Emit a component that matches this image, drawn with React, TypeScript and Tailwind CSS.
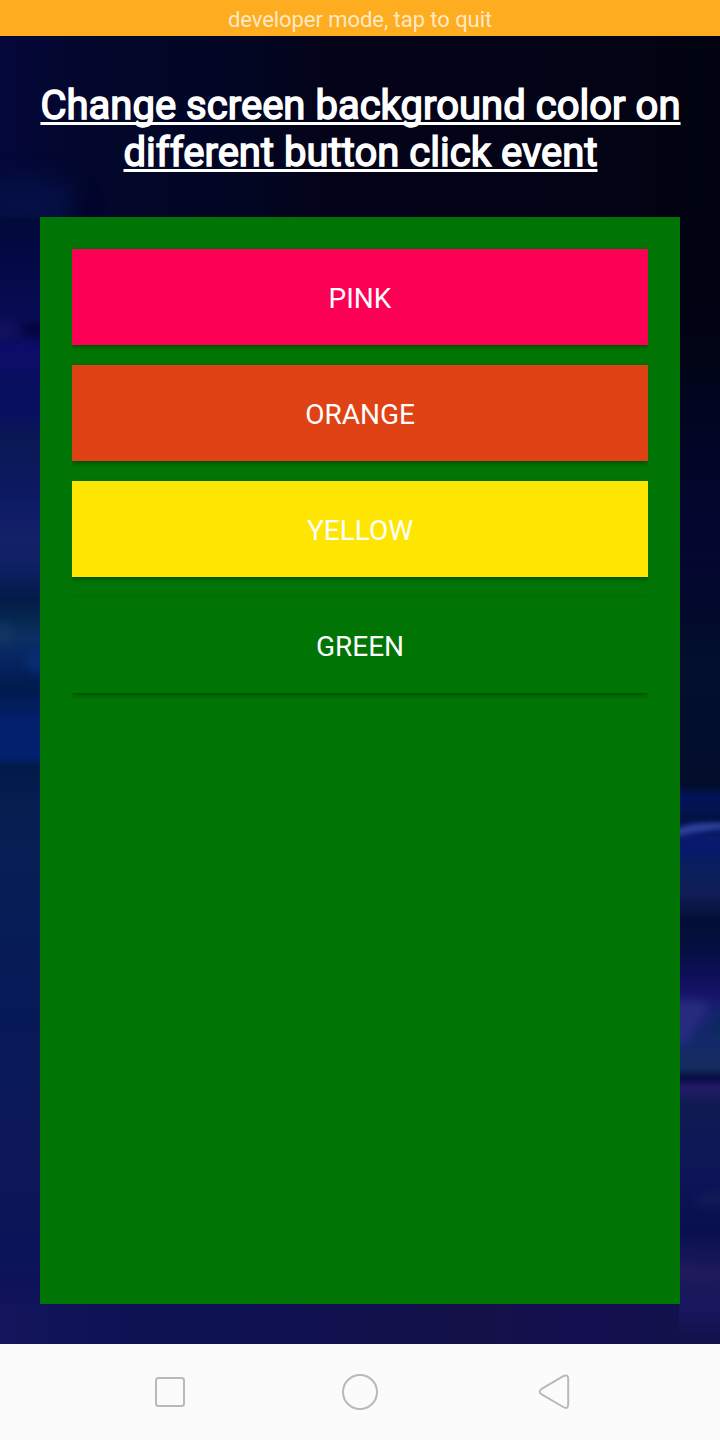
const leftStops: [number, string][] = [
  [36, "#040738"], [150, "#03073a"], [172, "#04094a"], [185, "#040a42"], [212, "#020b3a"], [241, "#02083f"],
  [295, "#050b4e"], [318, "#090d54"], [350, "#0e0c6a"], [385, "#090f5f"], [412, "#070f60"], [440, "#0a1854"], [500, "#0d1a64"],
  [540, "#14226a"], [572, "#0c1f5f"], [598, "#021b4a"], [620, "#05284f"], [638, "#0c3066"], [665, "#05225f"],
  [690, "#011b4d"], [720, "#02206c"], [757, "#02206e"], [766, "#001a4a"], [790, "#051d4e"], [850, "#081f55"],
  [1000, "#051a57"], [1130, "#0d1858"], [1250, "#0b1458"], [1344, "#14125c"],
];

const rightStops: [number, string][] = [
  [36, "#010410"], [180, "#050312"], [300, "#020213"], [360, "#010515"], [400, "#01051f"], [480, "#03062a"],
  [540, "#040630"], [610, "#02092c"], [660, "#020f2e"], [785, "#020d2c"], [797, "#03135a"], [818, "#021245"],
  [838, "#0a1a6e"], [850, "#07196c"], [870, "#0b205c"], [895, "#101c55"], [920, "#030e36"], [950, "#050f42"],
  [975, "#0f0f58"], [995, "#17146a"], [1015, "#1b2474"], [1045, "#142a68"], [1068, "#132c5c"], [1078, "#080c45"],
  [1088, "#221c68"], [1104, "#0f1a52"], [1180, "#0d1558"], [1230, "#08104f"], [1275, "#1c1a5c"], [1310, "#18165e"],
  [1344, "#101248"],
];

const Stops = ({ items }: { items: [number, string][] }) => (
  <>
    {items.map(([y, color]) => (
      <stop key={y} offset={(y - 36) / 1308} stopColor={color} />
    ))}
  </>
);

function Wallpaper() {
  return (
    <svg className="absolute inset-0 size-full" viewBox="0 36 720 1308" preserveAspectRatio="none" aria-hidden="true">
      <defs>
        <linearGradient id="left" gradientUnits="userSpaceOnUse" x1="0" y1="36" x2="0" y2="1344"><Stops items={leftStops} /></linearGradient>
        <linearGradient id="right" gradientUnits="userSpaceOnUse" x1="0" y1="36" x2="0" y2="1344"><Stops items={rightStops} /></linearGradient>
        <linearGradient id="top">
          <stop offset="0" stopColor="#04073a" />
          <stop offset=".12" stopColor="#03072c" />
          <stop offset=".35" stopColor="#020622" />
          <stop offset=".45" stopColor="#04031a" />
          <stop offset=".8" stopColor="#030316" />
          <stop offset="1" stopColor="#010410" />
        </linearGradient>
        <linearGradient id="bottom">
          <stop offset="0" stopColor="#14155c" />
          <stop offset=".2" stopColor="#0d1152" />
          <stop offset=".4" stopColor="#0f1150" />
          <stop offset=".65" stopColor="#141148" />
          <stop offset=".8" stopColor="#140f50" />
          <stop offset="1" stopColor="#111248" />
        </linearGradient>
        <filter id="soft" x="-60%" y="-60%" width="220%" height="220%" colorInterpolationFilters="sRGB"><feGaussianBlur stdDeviation="4" /></filter>
        <filter id="streak" x="-50%" y="-80%" width="200%" height="260%" colorInterpolationFilters="sRGB"><feGaussianBlur stdDeviation="2" /></filter>
        <filter id="glow" x="-50%" y="-80%" width="200%" height="260%" colorInterpolationFilters="sRGB"><feGaussianBlur stdDeviation="11" /></filter>
      </defs>
      <rect y="36" width="720" height="182" fill="url(#top)" />
      <rect y="1300" width="720" height="44" fill="url(#bottom)" />
      <ellipse cx="25" cy="203" rx="50" ry="26" fill="#051045" filter="url(#glow)" />
      <ellipse cx="89" cy="205" rx="8" ry="13" fill="#02042c" filter="url(#soft)" />
      <rect y="217" width="41" height="1087" fill="url(#left)" />
      <rect x="679" y="217" width="41" height="1127" fill="url(#right)" />
      <ellipse cx="35" cy="330" rx="14" ry="8" fill="#03053f" filter="url(#soft)" />
      <ellipse cx="4" cy="330" rx="12" ry="8" fill="#14125c" filter="url(#soft)" />
      <ellipse cx="2" cy="634" rx="12" ry="11" fill="#123462" filter="url(#soft)" />
      <ellipse cx="38" cy="661" rx="13" ry="11" fill="#072d72" filter="url(#soft)" />
      <path d="M675 829 Q695 821 725 823 V829 Q700 831 675 837Z" fill="#2c3e97" filter="url(#streak)" />
      <path d="M675 1000 L710 1002 L685 1044 H675Z" fill="#272c80" filter="url(#soft)" />
      <path d="M728 1000 V1030 L704 1036Z" fill="#092a5c" filter="url(#soft)" />
      <path d="M692 1203 Q704 1191 724 1193 V1206Z" fill="#171b57" filter="url(#soft)" />
      <path d="M675 1260 Q698 1270 724 1267 V1278 H675Z" fill="#201b5b" filter="url(#soft)" />
    </svg>
  );
}

const buttons = [
  { label: "PINK", color: "bg-[#fb0054]" },
  { label: "ORANGE", color: "bg-[#df4215]" },
  { label: "YELLOW", color: "bg-[#ffe602]" },
  { label: "GREEN", color: "bg-[#007404]" },
];

export default function App() {
  return (
    <div className="flex h-[1440px] w-[720px] flex-col overflow-hidden font-['Roboto',sans-serif]">
      <div className="flex h-9 shrink-0 items-center justify-center bg-[#ffad20] pt-1 text-[22px] leading-[26px] tracking-[-0.06px] text-white/75">
        developer mode, tap to quit
      </div>
      <main className="relative flex min-h-0 flex-1 flex-col bg-[#030720] px-10 pt-[46px] pb-10">
        <Wallpaper />
        <h1 className="relative -mx-2 h-[135px] shrink-0 pl-px text-center text-[40px] leading-[47px] font-normal tracking-[0.02px] text-white underline decoration-[3px] underline-offset-[3px] [-webkit-text-stroke:1.5px_white] [text-decoration-skip-ink:none]">
          Change screen background color on<br />different button click event
        </h1>
        <section className="relative flex min-h-0 flex-1 flex-col gap-5 bg-[#007404] px-8 pt-8">
          {buttons.map(({ label, color }) => (
            <div key={label} className="[clip-path:inset(-4px_0_-10px_0)]">
              <button className={`block h-24 w-full pt-1 text-[28px] text-white shadow-[0_2px_4px_rgba(0,0,0,0.34)] ${color}`}>
                {label}
              </button>
            </div>
          ))}
        </section>
      </main>
      <nav className="flex h-24 shrink-0 bg-[#fbfbfb]">
        <svg width="720" height="96" viewBox="0 1344 720 96" fill="none" stroke="#b9b9b9" strokeWidth="2">
          <rect x="156" y="1378" width="28" height="28" rx="2.5" />
          <circle cx="360" cy="1392" r="17" />
          <path d="M541.3 1389.2 563.2 1376.2 Q568.2 1373.8 568.2 1379 V1404 Q568.2 1409.8 563.2 1407 L541.3 1394.1 Q538 1391.7 541.3 1389.2Z" />
        </svg>
      </nav>
    </div>
  );
}
